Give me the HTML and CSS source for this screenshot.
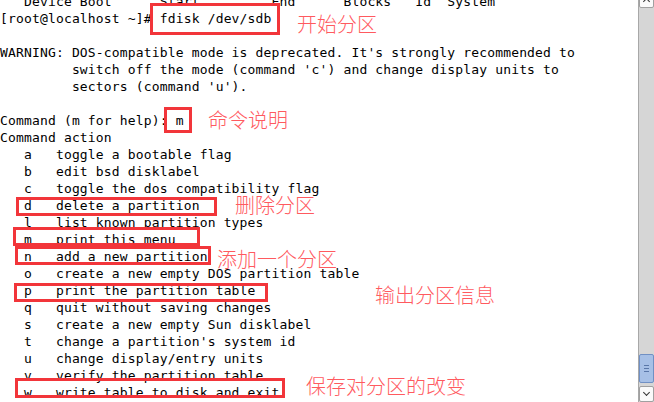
FILE: index.html
```
<!DOCTYPE html>
<html>
<head>
<meta charset="utf-8">
<link rel="stylesheet" href="styles.css">
</head>
<body>
<div class="screen">
  <div class="term">
<pre class="out">   Device Boot      Start         End      Blocks   Id  System
[root@localhost ~]# fdisk /dev/sdb

WARNING: DOS-compatible mode is deprecated. It's strongly recommended to
         switch off the mode (command 'c') and change display units to
         sectors (command 'u').

Command (m for help): m
Command action
   a   toggle a bootable flag
   b   edit bsd disklabel
   c   toggle the dos compatibility flag
   d   delete a partition
   l   list known partition types
   m   print this menu
   n   add a new partition
   o   create a new empty DOS partition table
   p   print the partition table
   q   quit without saving changes
   s   create a new empty Sun disklabel
   t   change a partition's system id
   u   change display/entry units
   v   verify the partition table
   w   write table to disk and exit</pre>
    <div class="box b-fdisk"></div>
    <div class="note n-fdisk">开始分区</div>
    <div class="box b-m"></div>
    <div class="note n-m">命令说明</div>
    <div class="box b-d"></div>
    <div class="note n-d">删除分区</div>
    <div class="box b-mm"></div>
    <div class="box b-n"></div>
    <div class="note n-n">添加一个分区</div>
    <div class="box b-p"></div>
    <div class="note n-p">输出分区信息</div>
    <div class="box b-w"></div>
    <div class="note n-w">保存对分区的改变</div>
  </div>
  <div class="scrollbar">
    <div class="sb-btn sb-up"><span class="chev up"></span></div>
    <div class="sb-track"></div>
    <div class="sb-thumb"><span class="grip"></span><span class="grip"></span><span class="grip"></span></div>
    <div class="sb-gap"></div>
    <div class="sb-btn sb-down"><span class="chev down"></span></div>
  </div>
</div>
</body>
</html>
```
FILE: styles.css
```
html, body {
  margin: 0;
  padding: 0;
  background: #ffffff;
  overflow: hidden;
}
.screen {
  width: 654px;
  height: 402px;
  display: flex;
  overflow: hidden;
}
.term {
  position: relative;
  flex: 1;
  overflow: hidden;
  background: #ffffff;
}
.out {
  margin: -7.5px 0 0 0;
  padding: 0;
  font-family: "DejaVu Sans Mono", monospace;
  font-size: 13px;
  letter-spacing: 0.16px;
  line-height: 17px;
  color: #000000;
}
.box {
  position: absolute;
  border: 3px solid #f2353a;
  box-sizing: border-box;
}
.note {
  position: absolute;
  font-family: "Noto Sans CJK SC", sans-serif;
  font-size: 20px;
  line-height: 20px;
  color: #ff5a5f;
  white-space: nowrap;
  font-weight: 300;
}
.b-fdisk { left: 150px; top: 3px; width: 130px; height: 32px; }
.n-fdisk { left: 297px; top: 14px; }
.b-m { left: 164px; top: 107px; width: 28px; height: 26px; }
.n-m { left: 208px; top: 110px; }
.b-d { left: 16px; top: 197px; width: 201px; height: 19px; }
.n-d { left: 235px; top: 195px; }
.b-mm { left: 13px; top: 227px; width: 187px; height: 19px; }
.b-n { left: 15px; top: 246px; width: 196px; height: 19px; }
.n-n { left: 217px; top: 249px; }
.b-p { left: 14px; top: 283px; width: 254px; height: 19px; }
.n-p { left: 375px; top: 285px; }
.b-w { left: 15px; top: 378px; width: 270px; height: 20px; }
.n-w { left: 306px; top: 376px; }

.scrollbar {
  width: 15px;
  height: 402px;
  display: flex;
  flex-direction: column;
  background: #d6d6d6;
  border-left: 1px solid #a8a8a8;
  box-sizing: content-box;
}
.sb-btn {
  height: 14px;
  background: #fafafa;
  border: 1px solid #a0a0a0;
  border-radius: 2px;
  display: flex;
  align-items: center;
  justify-content: center;
}
.sb-up {
  margin-top: -8px;
}
.sb-track {
  flex: 1;
}
.sb-thumb {
  height: 27px;
  background: #a7c0e6;
  border: 1px solid #7090c4;
  border-radius: 2px;
  display: flex;
  flex-direction: column;
  align-items: center;
  justify-content: center;
  gap: 2px;
}
.grip {
  width: 5px;
  height: 1px;
  background: #5a77a8;
}
.sb-gap {
  height: 3px;
}
.chev {
  width: 4px;
  height: 4px;
  border-right: 1.5px solid #333;
  border-bottom: 1.5px solid #333;
}
.chev.down { transform: rotate(45deg); margin-top: -3px; }
.chev.up { transform: rotate(-135deg); margin-top: 3px; }
```
